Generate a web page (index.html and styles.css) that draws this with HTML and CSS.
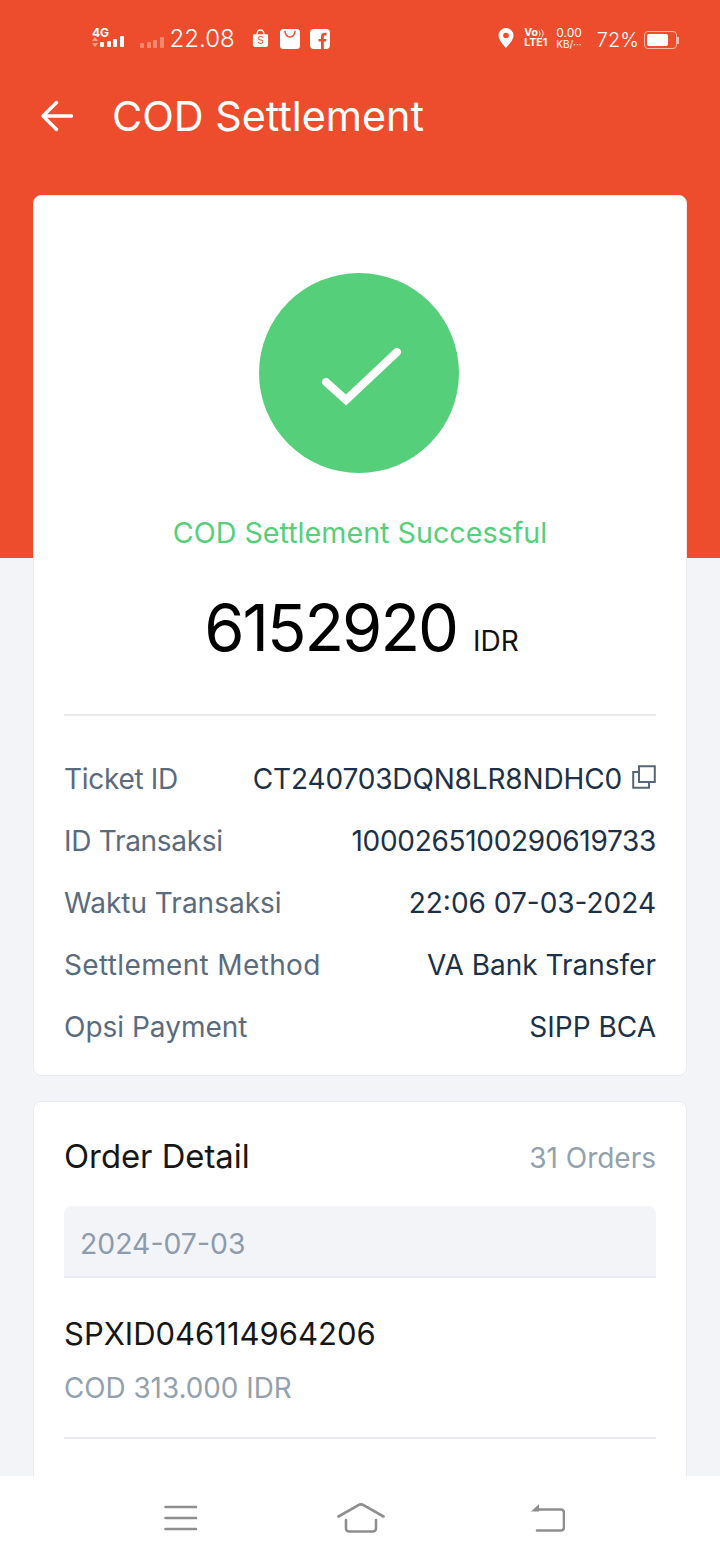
FILE: index.html
```html
<!DOCTYPE html>
<html lang="en">
<head>
    <meta charset="UTF-8">
    <meta name="viewport" content="width=device-width, initial-scale=1.0">
    <title>COD Settlement</title>
    <link rel="stylesheet" href="styles.css">
</head>
<body>
    <div class="screen">
        <div class="backdrop"></div>

        <!-- Status bar -->
        <div class="statusbar">
            <div class="status-left">
                <div class="signal">
                    <span class="net-label">4G</span>
                    <div class="net-row">
                        <svg class="net-arrows" width="6" height="10" viewBox="0 0 6 10"><path d="M3 0L6 4H0Z" fill="#f7a48e"/><path d="M3 10L0 6H6Z" fill="#f7a48e"/></svg>
                        <div class="bars">
                            <i class="b1"></i><i class="b2"></i><i class="b3"></i><i class="b4"></i>
                        </div>
                    </div>
                </div>
                <div class="bars bars-dim">
                    <i class="b1"></i><i class="b2"></i><i class="b3"></i><i class="b4"></i>
                </div>
                <span class="clock">22.08</span>
                <svg class="notif notif-shop" width="17" height="19" viewBox="0 0 18 20">
                    <path d="M5.500 6V4.500a3.500 3.500 0 0 1 7 0V6" fill="none" stroke="#fff" stroke-width="1.400"/>
                    <path d="M2 5.500h14a1 1 0 0 1 1 1V17a2 2 0 0 1-2 2H3a2 2 0 0 1-2-2V6.500a1 1 0 0 1 1-1z" fill="#fff"/>
                    <text x="9" y="16" text-anchor="middle" class="shop-s">S</text>
                </svg>
                <svg class="notif" width="20" height="20" viewBox="0 0 20 20">
                    <rect width="20" height="20" rx="3.500" fill="#fff"/>
                    <path d="M5 2.500c.6 3.800 2.500 5.500 5 5.500s4.400-1.700 5-5.500" fill="none" stroke="#ee4d2d" stroke-width="1.600" stroke-linecap="round"/>
                </svg>
                <svg class="notif" width="20" height="20" viewBox="0 0 20 20">
                    <rect width="20" height="20" rx="4" fill="#fff"/>
                    <path d="M11 20v-7.500H8.500V10H11V7.500C11 5 12.500 3.800 14.500 3.800H16.500V6.500H15C14 6.500 13.800 7 13.800 7.800V10h2.700l-.5 2.500h-2.200V20z" fill="#ee4d2d"/>
                </svg>
            </div>
            <div class="status-right">
                <svg width="16" height="20" viewBox="0 0 16 20">
                    <path d="M8 0a7.500 7.500 0 0 0-7.500 7.500C.5 12.500 8 20 8 20s7.500-7.500 7.500-12.500A7.500 7.500 0 0 0 8 0z" fill="#fff"/>
                    <circle cx="8" cy="7.500" r="2.800" fill="#ee4d2d"/>
                </svg>
                <div class="volte">
                    <span class="vo">Vo<svg width="6" height="9" viewBox="0 0 6 9"><path d="M1 1.500c1.300 1.800 1.300 4.200 0 6M3.500 .5c2 2.500 2 5.500 0 8" fill="none" stroke="#fff" stroke-width="1"/></svg></span>
                    <span>LTE1</span>
                </div>
                <div class="speed">
                    <span class="speed-num">0.00</span>
                    <span class="speed-unit">KB/···</span>
                </div>
                <span class="percent">72%</span>
                <div class="battery">
                    <div class="battery-body"><div class="battery-fill"></div></div>
                    <div class="battery-cap"></div>
                </div>
            </div>
        </div>

        <!-- App bar -->
        <div class="appbar">
            <svg class="back" width="32" height="32" viewBox="0 0 32 32">
                <path d="M30.500 16H3M15.500 2.500L2 16L15.500 29.500" fill="none" stroke="#fff" stroke-width="3.400" stroke-linecap="round" stroke-linejoin="round"/>
            </svg>
            <h1 class="title">COD Settlement</h1>
        </div>

        <div class="content">
            <!-- Result card -->
            <div class="card result-card">
                <div class="success-circle">
                    <svg width="88" height="70" viewBox="0 0 88 70">
                        <path d="M11 44L31 62L82 14" fill="none" stroke="#fff" stroke-width="8" stroke-linecap="round" stroke-linejoin="miter"/>
                    </svg>
                </div>
                <p class="success-text">COD Settlement Successful</p>
                <div class="amount-row">
                    <span class="amount">6152920</span>
                    <span class="currency">IDR</span>
                </div>
                <div class="details">
                    <div class="row">
                        <span class="row-label tight">Ticket ID</span>
                        <span class="row-value slim">CT240703DQN8LR8NDHC0
                            <svg class="copy" width="24" height="24" viewBox="0 0 24 24">
                                <path d="M7 1.200H22.800V17H7Z" fill="none" stroke="#56677a" stroke-width="2"/>
                                <path d="M7 7H1.200V22.800H17V17" fill="none" stroke="#56677a" stroke-width="2"/>
                            </svg>
                        </span>
                    </div>
                    <div class="row">
                        <span class="row-label tight">ID Transaksi</span>
                        <span class="row-value tight">1000265100290619733</span>
                    </div>
                    <div class="row">
                        <span class="row-label">Waktu Transaksi</span>
                        <span class="row-value">22:06 07-03-2024</span>
                    </div>
                    <div class="row">
                        <span class="row-label wide">Settlement Method</span>
                        <span class="row-value">VA Bank Transfer</span>
                    </div>
                    <div class="row">
                        <span class="row-label">Opsi Payment</span>
                        <span class="row-value">SIPP BCA</span>
                    </div>
                </div>
            </div>

            <!-- Orders card -->
            <div class="card order-card">
                <div class="order-head">
                    <span class="order-title">Order Detail</span>
                    <span class="order-count">31 Orders</span>
                </div>
                <div class="date-bar">2024-07-03</div>
                <div class="order-item">
                    <div class="order-id">SPXID046114964206</div>
                    <div class="order-cod">COD 313.000 IDR</div>
                </div>
            </div>
        </div>

        <!-- System nav -->
        <div class="navbar">
            <svg width="34" height="28" viewBox="0 0 34 28">
                <path d="M1.500 3H32M1.500 14H32M1.500 25H32" fill="none" stroke="#8e8e8e" stroke-width="2.600" stroke-linecap="round"/>
            </svg>
            <svg class="nav-home" width="48" height="30" viewBox="0 0 48 30">
                <path d="M1.500 13.500L21 2.300a6 6 0 0 1 6 0L46.500 13.500" fill="none" stroke="#8e8e8e" stroke-width="2.600" stroke-linecap="round"/>
                <path d="M9 17V25.500a3 3 0 0 0 3 3H36a3 3 0 0 0 3-3V17" fill="none" stroke="#8e8e8e" stroke-width="2.600" stroke-linecap="round"/>
            </svg>
            <svg class="nav-back" width="34" height="28" viewBox="0 0 34 28">
                <path d="M6 5.500H30a3 3 0 0 1 3 3V23.500a3 3 0 0 1-3 3H6" fill="none" stroke="#8e8e8e" stroke-width="2.600" stroke-linecap="round"/>
                <path d="M8 0V7.500H0Z" fill="#8e8e8e"/>
            </svg>
        </div>
    </div>
</body>
</html>
```

FILE: styles.css
```css
* {
    box-sizing: border-box;
}
body {
    margin: 0;
    font-family: Inter, "Noto Sans", sans-serif;
    background-color: #f3f4f8;
}
.screen {
    position: relative;
    width: 720px;
    height: 1560px;
    display: flex;
    flex-direction: column;
    overflow: hidden;
    background-color: #f3f4f8;
}
.backdrop {
    position: absolute;
    top: 0;
    left: 0;
    width: 100%;
    height: 558px;
    background-color: #ee4d2d;
}

/* status bar */
.statusbar {
    position: relative;
    height: 78px;
    flex: none;
    display: flex;
    justify-content: space-between;
    padding: 24px 41px 0 92px;
    color: #fff;
}
.status-left,
.status-right {
    display: flex;
    align-items: flex-start;
}
.signal {
    width: 32px;
    height: 26px;
    display: flex;
    flex-direction: column;
}
.net-label {
    margin-top: 3px;
    font-size: 12px;
    line-height: 12px;
    font-weight: 700;
}
.net-row {
    margin-top: -3px;
    display: flex;
    align-items: flex-end;
    gap: 2px;
}
.bars {
    display: flex;
    align-items: flex-end;
    gap: 2.500px;
    height: 11px;
}
.bars i {
    display: block;
    width: 4px;
    background-color: #fff;
    border-radius: 1px;
}
.bars .b1 { height: 5px; }
.bars .b2 { height: 6px; }
.bars .b3 { height: 8px; }
.bars .b4 { height: 11px; }
.bars-dim {
    margin: 13px 0 0 16px;
}
.bars-dim i {
    background-color: #f7886e;
}
.clock {
    margin-left: 6px;
    font-size: 24px;
    line-height: 30px;
    font-weight: 300;
}
.notif {
    margin: 5px 0 0 10px;
}
.notif-shop {
    margin-left: 17px;
    margin-right: 1px;
}
.shop-s {
    font-size: 11px;
    fill: #ee4d2d;
    font-family: Inter, sans-serif;
}
.status-right svg {
    margin-top: 4px;
}
.volte {
    margin: 4px 0 0 10px;
    display: flex;
    flex-direction: column;
    font-size: 10.500px;
    line-height: 10px;
    font-weight: 700;
}
.vo {
    display: flex;
    align-items: center;
}
.status-right .vo svg {
    margin-top: 0;
}
.speed {
    margin: 3px 0 0 9px;
    display: flex;
    flex-direction: column;
    align-items: center;
}
.speed-num {
    font-size: 12px;
    line-height: 12px;
}
.speed-unit {
    font-size: 10px;
    line-height: 11px;
}
.percent {
    margin: 2px 0 0 15px;
    font-size: 20px;
    line-height: 28px;
    font-weight: 300;
}
.battery {
    margin: 7px 0 0 5px;
    display: flex;
    align-items: center;
}
.battery-body {
    width: 33px;
    height: 18px;
    padding: 2px;
    border: 1px solid #f9b8a8;
    border-radius: 4px;
}
.battery-fill {
    width: 21px;
    height: 100%;
    background-color: #fff;
    border-radius: 2px;
}
.battery-cap {
    width: 2px;
    height: 7px;
    background-color: #f9b8a8;
}

/* app bar */
.appbar {
    position: relative;
    height: 76px;
    flex: none;
    display: flex;
    align-items: center;
    padding-left: 41px;
}
.title {
    margin: 0 0 0 39px;
    color: #fff;
    font-size: 41.300px;
    font-weight: 400;
}

/* cards */
.content {
    position: relative;
    flex: 1;
    min-height: 0;
    overflow: hidden;
    padding: 41px 33px 0;
}
.card {
    background-color: #fff;
    border: 1px solid #e8eaef;
    border-radius: 8px;
    padding: 0 30px;
}
.result-card {
    height: 881px;
    padding-top: 77px;
    display: flex;
    flex-direction: column;
}
.success-circle {
    width: 200px;
    height: 200px;
    flex: none;
    align-self: center;
    margin-right: 2px;
    display: flex;
    align-items: center;
    justify-content: center;
    border-radius: 50%;
    background-color: #55cf7a;
}
.success-text {
    margin: 42px 0 0;
    text-align: center;
    color: #55cf7a;
    font-size: 28.700px;
    line-height: 36px;
}
.amount-row {
    margin-top: 41px;
    height: 124px;
    padding-left: 3px;
    display: flex;
    justify-content: center;
    align-items: baseline;
    gap: 16px;
    border-bottom: 2px solid #e8eaef;
}
.amount {
    font-size: 65px;
    line-height: 72px;
    letter-spacing: -2px;
    color: #000;
}
.currency {
    font-size: 28px;
    color: #111;
}
.details {
    margin-top: 32px;
}
.row {
    height: 62px;
    display: flex;
    justify-content: space-between;
    align-items: center;
    font-size: 28px;
}
.row-label {
    color: #5a6b7e;
}
.row-value {
    display: flex;
    align-items: center;
    color: #1c3048;
}
.tight {
    letter-spacing: -0.300px;
}
.slim {
    letter-spacing: -0.150px;
}
.wide {
    letter-spacing: 0.350px;
}
.copy {
    margin: 0 0 4px 10px;
}

.order-card {
    height: 500px;
    margin-top: 25px;
}
.order-head {
    height: 104px;
    display: flex;
    justify-content: space-between;
    align-items: center;
}
.order-title {
    padding-top: 4px;
    font-size: 32.800px;
    color: #161616;
}
.order-count {
    padding-top: 7px;
    font-size: 28px;
    color: #93a1ae;
}
.date-bar {
    height: 72px;
    display: flex;
    align-items: center;
    padding: 5px 0 0 16px;
    background-color: #f3f4f8;
    border-radius: 8px 8px 0 0;
    border-bottom: 2px solid #e8eaef;
    color: #8d9bab;
    font-size: 28.400px;
}
.order-item {
    height: 161px;
    padding-top: 34px;
    border-bottom: 2px solid #e8eaef;
}
.order-id {
    font-size: 31px;
    line-height: 44px;
    color: #161616;
}
.order-cod {
    margin-top: 14px;
    font-size: 27.800px;
    line-height: 36px;
    color: #93a1ae;
}

/* system nav */
.navbar {
    position: relative;
    height: 84px;
    flex: none;
    display: flex;
    align-items: center;
    padding-left: 164px;
    background-color: #fff;
}
.nav-home {
    margin-left: 139px;
}
.nav-back {
    margin-left: 146px;
}
```
